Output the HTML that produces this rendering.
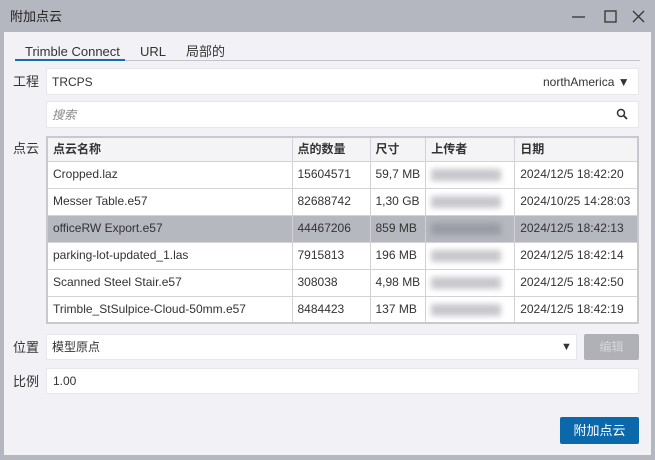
<!DOCTYPE html>
<html><head><style>
*{box-sizing:border-box;margin:0;padding:0}
body{width:655px;height:460px;background:#b4b7c0;font-family:"Liberation Sans","Noto Sans CJK SC",sans-serif;font-size:12px;line-height:15px;color:#333;position:relative;overflow:hidden}
.abs{position:absolute;line-height:15px}
.title{left:10px;top:9px;font-size:13px;color:#222}
.content{left:4px;top:32px;width:647px;height:423px;background:#f2f1f6}
.inp{position:absolute;background:#fff;border:1px solid #e6e6ec}
.lbl{position:absolute;left:13px;font-size:13px;line-height:15px;color:#333}
table{border-collapse:collapse;position:absolute;left:46px;top:136px;width:593px;background:#fff;border:2px solid #c8c8cf}
td,th{border:1px solid #d2d2d8;height:27px;padding:0 5px;text-align:left;white-space:nowrap;font-size:12px;line-height:15px}
th{font-weight:bold;height:24px;background:#f4f4f6}
tr.sel td{background:#b6b8c0}
.blur{display:inline-block;width:70px;height:12px;background:#c8c8cc;filter:blur(3px);vertical-align:middle}
</style></head><body>
<div class="abs title">附加点云</div>
<svg class="abs" style="left:570px;top:8px" width="80" height="18"><path d="M2 9h13" stroke="#333" stroke-width="1.3"/><rect x="35" y="3" width="11" height="11" fill="none" stroke="#333" stroke-width="1.3"/><path d="M63 3l11 11M74 3l-11 11" stroke="#333" stroke-width="1.3"/></svg>
<div class="abs content"></div>
<div class="abs" style="left:25px;top:44px;font-size:13px">Trimble Connect</div>
<div class="abs" style="left:140px;top:44px;font-size:13px">URL</div>
<div class="abs" style="left:186px;top:44px;font-size:13px">局部的</div>
<div class="abs" style="left:15px;top:60px;width:625px;height:1px;background:#c4c4cc"></div>
<div class="abs" style="left:15px;top:59px;width:110px;height:2px;background:#1a6cb0"></div>
<div class="lbl" style="top:74px">工程</div>
<div class="inp" style="left:46px;top:68px;width:593px;height:27px"></div>
<div class="abs" style="left:52px;top:75px">TRCPS</div>
<div class="abs" style="left:543px;top:75px">northAmerica ▼</div>
<div class="inp" style="left:46px;top:101px;width:593px;height:27px"></div>
<div class="abs" style="left:52px;top:108px;color:#888;font-style:italic">搜索</div>
<svg class="abs" style="left:616px;top:108px" width="12" height="12"><circle cx="5" cy="5" r="3.5" fill="none" stroke="#333" stroke-width="1.5"/><path d="M7.5 7.5l3.5 3.5" stroke="#333" stroke-width="1.8"/></svg>
<div class="lbl" style="top:141px">点云</div>
<table>
<tr><th style="width:245px">点云名称</th><th style="width:78px">点的数量</th><th style="width:55px">尺寸</th><th style="width:89px">上传者</th><th>日期</th></tr>
<tr><td>Cropped.laz</td><td>15604571</td><td>59,7 MB</td><td><span class="blur"></span></td><td>2024/12/5 18:42:20</td></tr>
<tr><td>Messer Table.e57</td><td>82688742</td><td>1,30 GB</td><td><span class="blur"></span></td><td>2024/10/25 14:28:03</td></tr>
<tr class="sel"><td>officeRW Export.e57</td><td>44467206</td><td>859 MB</td><td><span class="blur" style="background:#9a9ca4"></span></td><td>2024/12/5 18:42:13</td></tr>
<tr><td>parking-lot-updated_1.las</td><td>7915813</td><td>196 MB</td><td><span class="blur"></span></td><td>2024/12/5 18:42:14</td></tr>
<tr><td>Scanned Steel Stair.e57</td><td>308038</td><td>4,98 MB</td><td><span class="blur"></span></td><td>2024/12/5 18:42:50</td></tr>
<tr><td>Trimble_StSulpice-Cloud-50mm.e57</td><td>8484423</td><td>137 MB</td><td><span class="blur"></span></td><td>2024/12/5 18:42:19</td></tr>
</table>
<div class="lbl" style="top:340px">位置</div>
<div class="inp" style="left:46px;top:334px;width:531px;height:26px"></div>
<div class="abs" style="left:52px;top:340px">模型原点</div>
<div class="abs" style="left:561px;top:340px;font-size:11px">▼</div>
<div class="abs" style="left:584px;top:334px;width:55px;height:26px;background:#b0b1b6;border-radius:2px;color:#d6d6da;text-align:center;line-height:26px">编辑</div>
<div class="lbl" style="top:374px">比例</div>
<div class="inp" style="left:46px;top:368px;width:593px;height:26px"></div>
<div class="abs" style="left:53px;top:374px">1.00</div>
<div class="abs" style="left:560px;top:417px;width:79px;height:27px;background:#0a68ab;border-radius:2px;color:#fff;text-align:center;line-height:27px;font-size:13px">附加点云</div>
</body></html>
